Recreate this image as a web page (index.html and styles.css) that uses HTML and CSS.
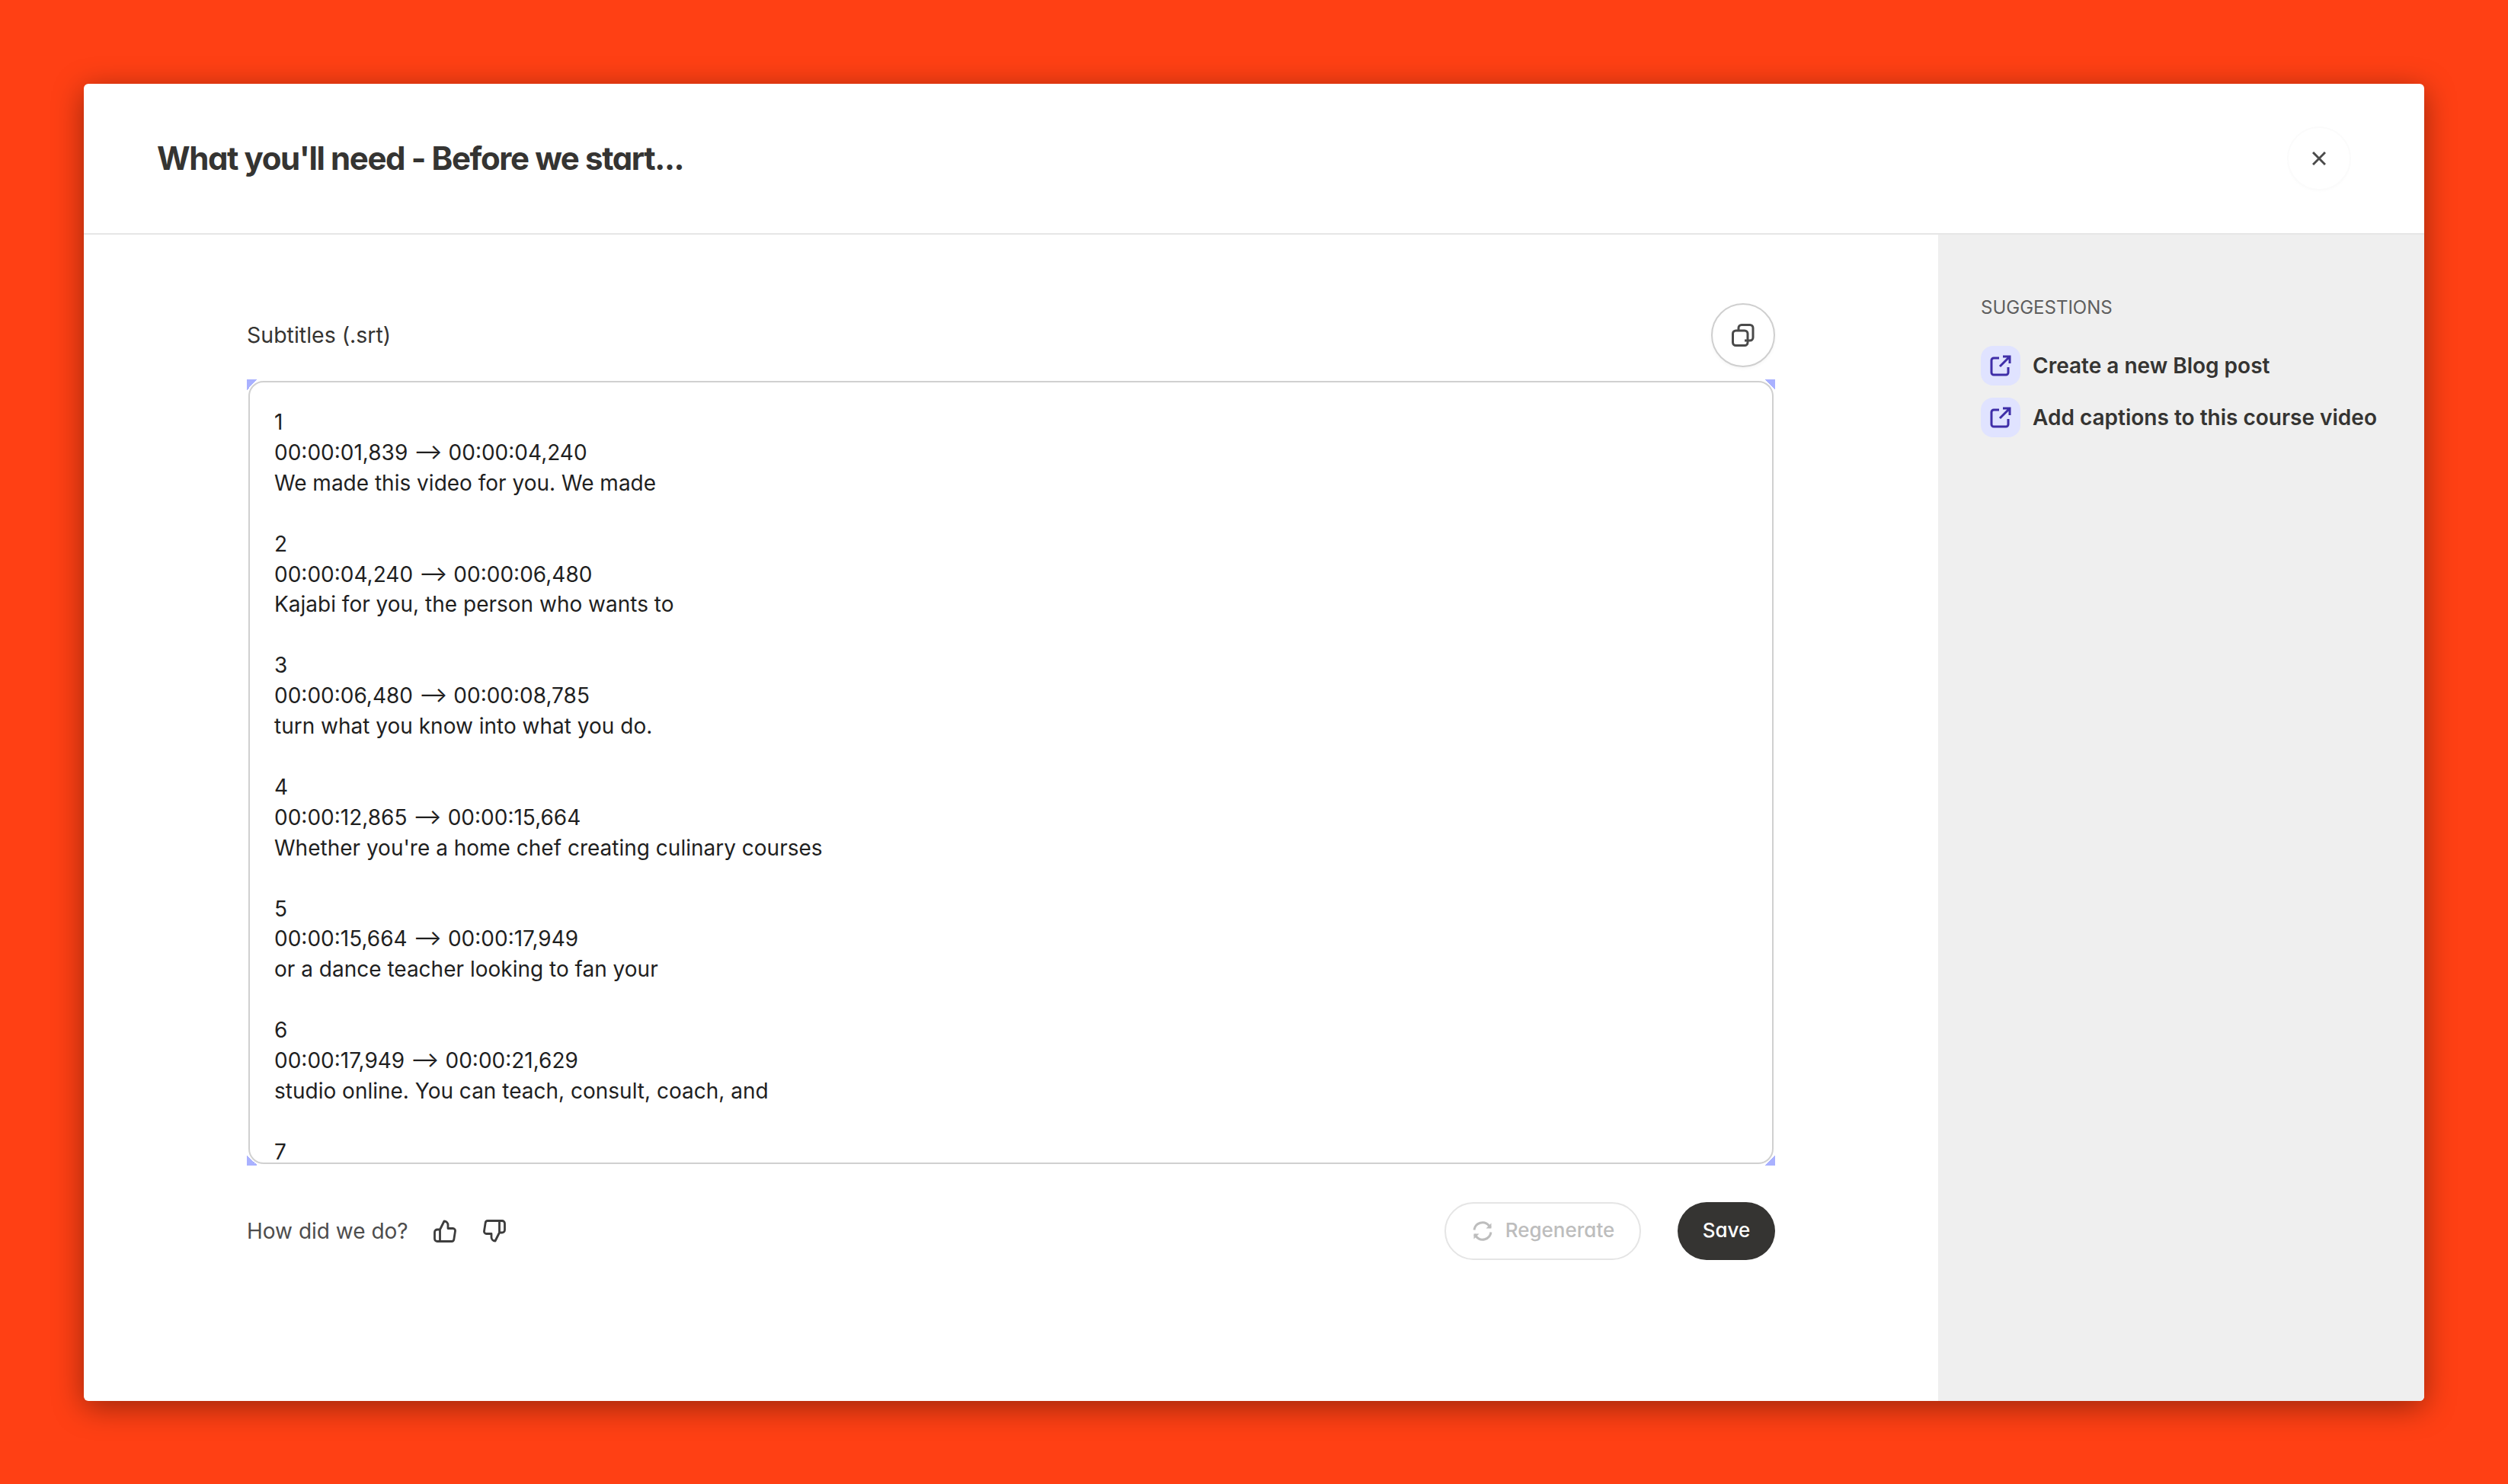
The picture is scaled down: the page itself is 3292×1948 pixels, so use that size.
FILE: index.html
```html
<!DOCTYPE html>
<html lang="en">
<head>
<meta charset="utf-8">
<title>What you'll need</title>
<link rel="stylesheet" href="styles.css">
</head>
<body>
<div class="modal">
  <header class="modal-head">
    <h1 class="title">What you'll need - Before we start...</h1>
    <button class="close" aria-label="Close">
      <svg class="close-icon" viewBox="0 0 18 18"><path d="M1 1l16 16M17 1L1 17"/></svg>
    </button>
  </header>
  <div class="modal-body">
    <main class="content">
      <div class="label-row">
        <span class="label">Subtitles (.srt)</span>
        <button class="copy" aria-label="Copy">
          <svg class="copy-icon" viewBox="0 0 30 30"><rect x="1.5" y="9" width="19.5" height="19.5" rx="4"/><path d="M9 9V5.5a4 4 0 0 1 4-4h11a4 4 0 0 1 4 4V18a4 4 0 0 1-4 4h-7"/></svg>
        </button>
      </div>
      <div class="editor-frame">
        <pre class="editor">1
00:00:01,839 --&gt; 00:00:04,240
We made this video for you. We made

2
00:00:04,240 --&gt; 00:00:06,480
Kajabi for you, the person who wants to

3
00:00:06,480 --&gt; 00:00:08,785
turn what you know into what you do.

4
00:00:12,865 --&gt; 00:00:15,664
Whether you're a home chef creating culinary courses

5
00:00:15,664 --&gt; 00:00:17,949
or a dance teacher looking to fan your

6
00:00:17,949 --&gt; 00:00:21,629
studio online. You can teach, consult, coach, and

7</pre>
      </div>
      <footer class="actions">
        <div class="feedback">
          <span class="feedback-text">How did we do?</span>
          <svg class="thumb" viewBox="0 0 30 30"><path d="M8.5 28.5H5a3.5 3.5 0 0 1-3.500-3.500V16.500A3.500 3.500 0 0 1 5 13h3.500l5.500-11c2.800 0 5 2.200 5 5v4.500h6.500a3 3 0 0 1 3 3.500l-1.700 11a3 3 0 0 1-3 2.500H8.500zM8.500 13v15.500"/></svg>
          <svg class="thumb" viewBox="0 0 30 30"><path d="M21.500 1.500H25A3.500 3.500 0 0 1 28.500 5v8.500A3.500 3.500 0 0 1 25 17h-3.500l-5.500 11c-2.800 0-5-2.200-5-5v-4.500H4.500a3 3 0 0 1-3-3.500l1.700-11a3 3 0 0 1 3-2.500h15.300zM21.500 17V1.500"/></svg>
        </div>
        <div class="buttons">
          <button class="btn btn-ghost">
            <svg class="refresh" viewBox="0 0 26 26"><path d="M2 11.500A11 11 0 0 1 21.500 6l2 2.500M24 14.500A11 11 0 0 1 4.500 20l-2-2.500"/><path class="fill" d="M24.500 2.500v7h-7zM1.500 23.500v-7h7z"/></svg>
            <span class="btn-text">Regenerate</span>
          </button>
          <button class="btn btn-dark"><span class="btn-text">Save</span></button>
        </div>
      </footer>
    </main>
    <aside class="side">
      <div class="side-title">SUGGESTIONS</div>
      <ul class="side-list">
        <li class="side-item">
          <span class="badge"><svg class="ext" viewBox="0 0 28 28"><path d="M12 4H5a3 3 0 0 0-3 3v16a3 3 0 0 0 3 3h16a3 3 0 0 0 3-3v-7M13 15L26 2M17 2h9v9"/></svg></span>
          Create a new Blog post
        </li>
        <li class="side-item">
          <span class="badge"><svg class="ext" viewBox="0 0 28 28"><path d="M12 4H5a3 3 0 0 0-3 3v16a3 3 0 0 0 3 3h16a3 3 0 0 0 3-3v-7M13 15L26 2M17 2h9v9"/></svg></span>
          Add captions to this course video
        </li>
      </ul>
    </aside>
  </div>
</div>
</body>
</html>
```

FILE: styles.css
```css
* { box-sizing: border-box; }
html, body { margin: 0; height: 100%; }
body {
  background: #ff4014;
  padding: 110px;
  font-family: Inter, "Liberation Sans", sans-serif;
  color: #353432;
  overflow: hidden;
}
button { font-family: inherit; background: none; cursor: pointer; padding: 0; }
.modal {
  width: 3072px;
  height: 1729px;
  background: #fff;
  border-radius: 6px;
  box-shadow: 0 8px 40px rgba(0, 0, 0, 0.4);
  display: flex;
  flex-direction: column;
  overflow: hidden;
}
.modal-head {
  height: 198px;
  flex: none;
  border-bottom: 2px solid #e6e6e6;
  padding: 0 96px;
  display: flex;
  align-items: center;
  justify-content: space-between;
}
.title {
  margin: 0 0 2px;
  font-size: 42px;
  font-weight: 700;
  letter-spacing: -1.4px;
  font-feature-settings: "cv11";
}
.close {
  width: 84px;
  height: 84px;
  border-radius: 50%;
  border: 2px solid #fbfbfb;
  background: #fff;
  box-shadow: 0 2px 3px rgba(0, 0, 0, 0.01);
  display: flex;
  align-items: center;
  justify-content: center;
}
.close-icon { width: 18px; height: 18px; fill: none; stroke: #4a4a4a; stroke-width: 3; }
.modal-body { flex: 1; display: flex; min-height: 0; }
.content { flex: 1; padding: 90px 214px 0; }
.label-row {
  display: flex;
  align-items: center;
  justify-content: space-between;
  height: 84px;
  margin-bottom: 16px;
}
.label { font-size: 28.5px; color: #353432; padding-bottom: 1px; }
.copy {
  width: 84px;
  height: 84px;
  border-radius: 50%;
  border: 2px solid #cfcfcf;
  background: #fff;
  box-shadow: 0 2px 4px rgba(0, 0, 0, 0.04);
  display: flex;
  align-items: center;
  justify-content: center;
}
.copy-icon { width: 30px; height: 30px; fill: none; stroke: #4a4a4a; stroke-width: 3; }
.editor-frame {
  height: 1032px;
  padding: 2px;
  background:
    linear-gradient(135deg, #a9b1ff 50%, transparent 50%) left top / 14px 14px no-repeat,
    linear-gradient(225deg, #a9b1ff 50%, transparent 50%) right top / 14px 14px no-repeat,
    linear-gradient(45deg, #a9b1ff 50%, transparent 50%) left bottom / 14px 14px no-repeat,
    linear-gradient(315deg, #a9b1ff 50%, transparent 50%) right bottom / 14px 14px no-repeat;
}
.editor {
  margin: 0;
  height: 100%;
  overflow: hidden;
  background: #fff;
  border: 2px solid #d0d0d0;
  border-radius: 20px;
  padding: 33px 32px 0;
  font-family: Inter, "Liberation Sans", sans-serif;
  font-size: 28px;
  line-height: 39.9px;
  color: #1f1f1f;
}
.actions {
  display: flex;
  align-items: center;
  justify-content: space-between;
  margin-top: 48px;
  height: 76px;
}
.feedback { display: flex; align-items: center; gap: 35px; }
.feedback-text { font-size: 28px; color: #4d4d4d; margin-right: -2px; }
.thumb { width: 30px; height: 30px; fill: none; stroke: #3d3d3d; stroke-width: 2.800; stroke-linejoin: round; }
.buttons { display: flex; gap: 48px; }
.btn {
  height: 76px;
  border-radius: 38px;
  font-size: 26px;
  font-weight: 500;
  display: flex;
  align-items: center;
  justify-content: center;
  font-feature-settings: "cv11";
}
.btn-text { padding-bottom: 4px; }
.btn-ghost {
  width: 258px;
  gap: 17px;
  padding-left: 2px;
  border: 2px solid #e5e5e5;
  color: #bdbdbd;
}
.refresh { width: 26px; height: 26px; fill: none; stroke: #bdbdbd; stroke-width: 3; }
.refresh .fill { fill: #bdbdbd; stroke: none; }
.btn-dark {
  width: 128px;
  border: 0;
  background: #353432;
  color: #fff;
}
.side {
  width: 638px;
  flex: none;
  background: #efefef;
  padding: 82px 0 0 56px;
}
.side-title { font-size: 24px; color: #5e5e5e; line-height: 28px; }
.side-list { list-style: none; margin: 36px 0 0; padding: 0; display: flex; flex-direction: column; gap: 16px; }
.side-item { display: flex; align-items: center; gap: 16px; height: 52px; font-size: 28px; font-weight: 600; color: #353432; white-space: nowrap; }
.badge { width: 52px; height: 52px; border-radius: 16px; background: #e0e3ff; display: flex; align-items: center; justify-content: center; }
.ext { width: 28px; height: 28px; fill: none; stroke: #3f2ea8; stroke-width: 3; }
```
